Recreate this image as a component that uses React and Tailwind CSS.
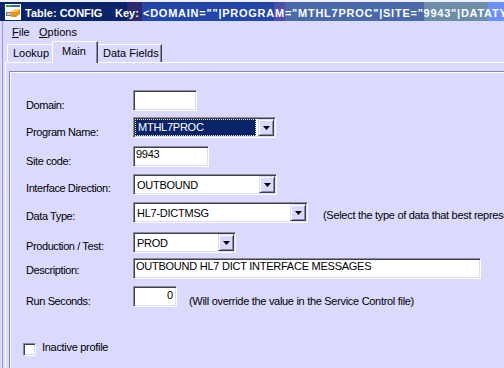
import React from "react";

const sunken =
  "border border-t-[#8a8aa8] border-l-[#8a8aa8] border-b-white border-r-white shadow-[inset_1px_1px_0_#404040,inset_-1px_-1px_0_#dadaff]";

function Arrow() {
  return (
    <div className="w-[16px] h-[17px] shrink-0 bg-[#dadaff] border border-t-[#dadaff] border-l-[#dadaff] border-b-[#404040] border-r-[#404040] shadow-[inset_1px_1px_0_#ffffff,inset_-1px_-1px_0_#8a8aa8] flex items-center justify-center">
      <svg width="7" height="4" viewBox="0 0 7 4" className="block">
        <polygon points="0,0 7,0 3.5,4" fill="#000" />
      </svg>
    </div>
  );
}

function Row({ mt, labelPt, label, children }) {
  return (
    <div className={`flex items-start h-[21px] ${mt}`}>
      <div className={`w-[107px] shrink-0 tracking-[-0.4px] ${labelPt}`}>{label}</div>
      {children}
    </div>
  );
}

export default function App() {
  return (
    <div className="relative w-[504px] h-[368px] overflow-hidden bg-[#dadaff] text-black text-[11px] leading-[13px] font-['Liberation_Sans',Arial,sans-serif]">
      <div className="h-[2px] bg-[#eeeeff]" />
      <div className="h-[19px] flex items-start whitespace-nowrap overflow-hidden text-white font-bold bg-[linear-gradient(90deg,#0a246a_0px,#0a246a_127px,#2b2a6c_127px,#2b2a6c_142px,#2346a8_142px,#2346a8_274px,#4d4da9_274px,#4d4da9_285px,#4a69a9_285px,#4a69a9_424px,#6c8ea9_424px,#6c8ea9_488px,#6f8ffb_488px,#6f8ffb_100%)]">
        <svg width="16" height="16" viewBox="0 0 16 16" className="ml-[5px] mt-[2px] shrink-0">
          <rect x="0" y="0" width="16" height="16" fill="#ffffff" />
          <rect x="1" y="1" width="5" height="2" fill="#22b822" />
          <rect x="6" y="1" width="9" height="2" fill="#2a62e0" />
          <rect x="1" y="8" width="6" height="4" fill="#7a7a7a" />
          <rect x="2" y="9" width="4" height="2" fill="#c8c8c8" />
          <polygon points="6,8 10,5 15,5 15,10 11,13 6,13" fill="#e89418" />
          <polygon points="6,8 10,5 15,5 11,8" fill="#ffd84a" />
        </svg>
        <span className="ml-[4px] mt-[5px] w-[90px] shrink-0">Table: CONFIG</span>
        <span className="mt-[5px] w-[28px] shrink-0">Key:</span>
        <span className="mt-[5px] tracking-[0.75px]">
          {'<DOMAIN=""|PROGRAM="MTHL7PROC"|SITE="9943"|DATATYPE="HL7-DICTMSG">'}
        </span>
      </div>

      <div className="ml-[2px] border-l border-[#9a9ad0]">
        <div className="h-[20px] flex items-start pl-[9px] pt-[5px]">
          <span className="w-[27px]">
            <span className="underline">F</span>ile
          </span>
          <span>
            <span className="underline">O</span>ptions
          </span>
        </div>

        <div className="ml-[2px]">
          <div className="relative z-10 flex items-end h-[22px] pl-[2px] -mb-px">
            <div className="w-[45px] h-[18px] mb-[1px] border-t border-l border-white rounded-tl-[2px] pl-[5px] pt-[2px]">
              Lookup
            </div>
            <div className="w-[46px] h-[22px] bg-[#dadaff] border-t border-l border-white border-r border-r-[#404040] shadow-[inset_-1px_0_0_#8a8aa8] rounded-tl-[2px] pt-[3px] pl-[9px]">
              Main
            </div>
            <div className="w-[64px] h-[18px] mb-[1px] border-t border-white border-r border-r-[#404040] shadow-[inset_-1px_0_0_#8a8aa8] pt-[2px] pl-[5px]">
              Data Fields
            </div>
          </div>

          <div className="h-[320px] border-t border-l border-white">
            <div className="ml-[3px] mt-[8px] w-[600px] h-[400px] border-t border-l border-[#8a8aa8] shadow-[inset_1px_1px_0_#ffffff] pl-[16px]">
              <Row mt="mt-[18px]" labelPt="pt-[9px]" label="Domain:">
                <div className={`w-[64px] h-[21px] bg-white p-[1px] ${sunken}`} />
              </Row>

              <Row mt="mt-[6px]" labelPt="pt-[9px]" label="Program Name:">
                <div className={`flex w-[143px] h-[21px] bg-white p-[1px] ${sunken}`}>
                  <div className="flex-1 mr-[2px] bg-[#0a246a] border border-dotted border-[#e8e8b0] text-white pl-[2px] pt-[1px] tracking-[-0.25px]">
                    MTHL7PROC
                  </div>
                  <Arrow />
                </div>
              </Row>

              <Row mt="mt-[8px]" labelPt="pt-[9px]" label="Site code:">
                <div className={`w-[76px] h-[21px] bg-white p-[1px] pl-[2px] tracking-[-0.25px] ${sunken}`}>
                  9943
                </div>
              </Row>

              <Row mt="mt-[7px]" labelPt="pt-[8px]" label="Interface Direction:">
                <div className={`flex w-[144px] h-[21px] bg-white p-[1px] ${sunken}`}>
                  <div className="flex-1 pl-[2px] pt-[3px] tracking-[-0.25px]">OUTBOUND</div>
                  <Arrow />
                </div>
              </Row>

              <Row mt="mt-[7px]" labelPt="pt-[8px]" label="Data Type:">
                <div className={`flex w-[175px] h-[21px] shrink-0 bg-white p-[1px] ${sunken}`}>
                  <div className="flex-1 pl-[2px] pt-[3px] tracking-[-0.25px]">HL7-DICTMSG</div>
                  <Arrow />
                </div>
                <div className="ml-[15px] pt-[7px] whitespace-nowrap tracking-[-0.3px]">
                  (Select the type of data that best represents this interface)
                </div>
              </Row>

              <Row mt="mt-[9px]" labelPt="pt-[8px]" label="Production / Test:">
                <div className={`flex w-[103px] h-[21px] bg-white p-[1px] ${sunken}`}>
                  <div className="flex-1 pl-[2px] pt-[3px] tracking-[-0.25px]">PROD</div>
                  <Arrow />
                </div>
              </Row>

              <Row mt="mt-[5px]" labelPt="pt-[6px]" label="Description:">
                <div className={`w-[348px] h-[21px] bg-white p-[1px] pl-[2px] whitespace-nowrap tracking-[-0.25px] ${sunken}`}>
                  OUTBOUND HL7 DICT INTERFACE MESSAGES
                </div>
              </Row>

              <Row mt="mt-[7px]" labelPt="pt-[9px]" label="Run Seconds:">
                <div className={`w-[44px] h-[21px] shrink-0 bg-white p-[1px] pt-[2px] pr-[3px] text-right ${sunken}`}>
                  0
                </div>
                <div className="ml-[12px] pt-[9px] whitespace-nowrap tracking-[-0.3px]">
                  (Will override the value in the Service Control file)
                </div>
              </Row>

              <div className="flex items-start mt-[34px] -ml-[3px]">
                <div className={`w-[13px] h-[13px] mt-[2px] bg-white ${sunken}`} />
                <div className="ml-[6px] tracking-[-0.3px]">Inactive profile</div>
              </div>
            </div>
          </div>
        </div>
      </div>
    </div>
  );
}
